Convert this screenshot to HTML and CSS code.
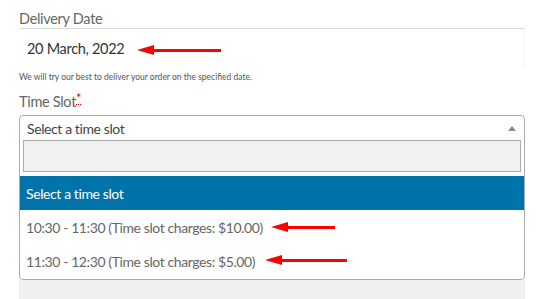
FILE: index.html
```html
<!DOCTYPE html>
<html lang="en">
<head>
    <meta charset="UTF-8">
    <meta name="viewport" content="width=device-width, initial-scale=1.0">
    <title>Delivery Date</title>
    <link rel="stylesheet" href="styles.css">
</head>
<body>
    <div class="checkout-fields">
        <div class="form-row">
            <label class="field-label">Delivery Date</label>
            <div class="date-input">
                <span>20 March, 2022</span>
                <span class="arrow arrow-date"></span>
            </div>
            <p class="description">We will try our best to deliver your order on the specified date.</p>
        </div>

        <div class="form-row">
            <label class="field-label">Time Slot<abbr class="required" title="required">*</abbr></label>
            <div class="select-wrap">
                <div class="select-box">
                    <div class="selection">
                        <span>Select a time slot</span>
                        <span class="caret"></span>
                    </div>
                    <div class="search-row">
                        <input class="search-field" type="text">
                    </div>
                    <ul class="results">
                        <li class="highlighted">Select a time slot</li>
                        <li>10:30 - 11:30 (Time slot charges: $10.00)<span class="arrow arrow-one"></span></li>
                        <li>11:30 - 12:30 (Time slot charges: $5.00)<span class="arrow arrow-two"></span></li>
                    </ul>
                </div>
                <div class="below"></div>
            </div>
        </div>
    </div>
</body>
</html>
```

FILE: styles.css
```css
body {
    margin: 0;
    padding: 0;
    background-color: #fff;
    font-family: Lato, "Open Sans", sans-serif;
    color: #555;
}

.checkout-fields {
    width: 506px;
    padding: 9px 0 0 19px;
}

.field-label {
    display: block;
    font-size: 14.5px;
    letter-spacing: -0.3px;
    line-height: 19px;
    color: #666;
}

.date-input {
    position: relative;
    height: 39px;
    border-top: 1px solid #ddd;
    border-right: 1px solid #f4f4f4;
    display: flex;
    align-items: center;
    padding-left: 8px;
    font-size: 14.5px;
    letter-spacing: -0.3px;
    color: #333;
}

.description {
    margin: 0;
    padding-top: 2px;
    font-size: 8.5px;
    line-height: 14px;
    color: #555;
}

.form-row + .form-row {
    margin-top: 8px;
}

.required {
    color: #e00;
    text-decoration: underline dotted;
    border: none;
    font-size: 13px;
    vertical-align: top;
    line-height: 12px;
}

.select-wrap {
    margin-top: 4px;
}

.select-box {
    border: 1px solid #aaa;
    border-radius: 4px;
    background-color: #fff;
    overflow: hidden;
}

.selection {
    display: flex;
    justify-content: space-between;
    align-items: center;
    height: 24px;
    padding: 0 8px 0 7px;
    font-size: 14px;
    letter-spacing: -0.4px;
    color: #444;
}

.caret {
    width: 0;
    height: 0;
    border-left: 4px solid transparent;
    border-right: 4px solid transparent;
    border-bottom: 5px solid #888;
}

.search-row {
    padding: 0 3px 4px 3px;
}

.search-field {
    display: block;
    box-sizing: border-box;
    width: 100%;
    height: 32px;
    margin: 0;
    border: 1px solid #aaa;
    background-color: #f1f1f1;
}

.results {
    list-style: none;
    margin: 0;
    padding: 0;
}

.results li {
    position: relative;
    height: 34px;
    display: flex;
    align-items: center;
    padding-left: 6px;
    font-size: 14px;
    letter-spacing: -0.4px;
    color: #666;
}

.results li.highlighted {
    background-color: #0073aa;
    color: #fff;
}

.results li:last-child {
    height: 35px;
}

.below {
    height: 20px;
    background-color: #f0f0f0;
}

.arrow {
    position: absolute;
    height: 3px;
    background-color: #f00;
}

.arrow::before {
    content: "";
    position: absolute;
    left: -16px;
    top: -4px;
    border-top: 5px solid transparent;
    border-bottom: 5px solid transparent;
    border-right: 17px solid #f00;
}

.arrow-date {
    left: 134px;
    width: 68px;
    top: 20px;
}

.arrow-one {
    left: 267px;
    width: 48px;
    top: 16px;
}

.arrow-two {
    left: 261px;
    width: 66px;
    top: 15px;
}
```
